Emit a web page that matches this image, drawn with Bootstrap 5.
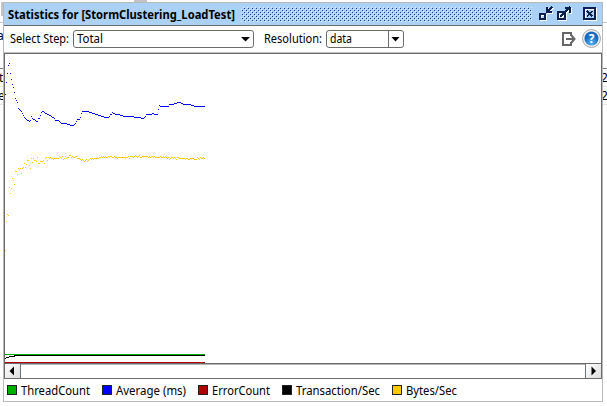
<!DOCTYPE html>
<html lang="en">
<head>
<meta charset="utf-8">
<title>Statistics</title>
<link href="https://cdn.jsdelivr.net/npm/bootstrap@5.3.0/dist/css/bootstrap.min.css" rel="stylesheet">
<style>
body{width:607px;height:406px;overflow:hidden;background:#fff;color:#000;font:12px/16px "Noto Sans","Open Sans",sans-serif}
svg{display:block;flex:none}
svg text{font:12px "Noto Sans",sans-serif}
.behind{position:absolute;left:0;top:0}
.win{position:relative;width:600px;height:400px;margin:2px 0 0 3px;border:1px solid #b9b9b9;background:#fff}
.titlebar{height:23px;background:#abd1f7;border-bottom:1px solid #6b6b6b;padding-left:4px}
.tools{height:27px;padding-left:6px;border-bottom:1px solid #c0c0c0}
.pick{height:18px;border:1px solid #6b6b6b;border-radius:3px;background:#fff}
.pick-step{width:181px}
.pick-res{width:78px}
.plot{height:310px;border:1px solid #6b6b6b;border-bottom:0}
.scroller{height:16px;border:1px solid #6b6b6b;box-shadow:inset 0 1px #b5b5b5}
.arrow{width:16px;height:14px;background:linear-gradient(135deg,#fff,#ddd)}
.legend-row{height:22px}
</style>
</head>
<body>
<svg class="behind" width="607" height="406" shape-rendering="crispEdges">
<path d="M0 22.500h3M603 22.500h4" stroke="#c4c4c4"/><path d="M0 68.500h3M603 68.500h4" stroke="#777"/><path d="M0 86.500h3M603 86.500h4M0 104.500h3M603 104.500h4" stroke="#e6e6e6"/>
<path d="M1 2h2v14h-2z" fill="#c4c4c4"/><path d="M134 1h13M136 .5h9" stroke="#c4c4c4" stroke-width="2"/>
<text x="-3" y="40">a</text><text x="-1" y="82">t</text><text x="-2" y="100">e</text><text x="601" y="82">2</text><text x="601" y="100">2</text>
</svg>
<main class="win d-flex flex-column">
<header class="titlebar d-flex align-items-center">
<svg width="231" height="22"><text x="0" y="16" textLength="227" lengthAdjust="spacingAndGlyphs" style="font-weight:700">Statistics for [StormClustering_LoadTest]</text></svg>
<svg width="294" height="22" shape-rendering="crispEdges"><defs><pattern id="dots" width="4" height="4" patternUnits="userSpaceOnUse"><path d="M1 1h1v1h-1zM3 3h1v1h-1z" fill="#163c84"/><path d="M0 0h1v1h-1zM2 2h1v1h-1z" fill="#e4f1ff"/></pattern></defs><rect x="2" y="4" width="291" height="15" fill="url(#dots)"/></svg>
<svg class="ms-1" width="64" height="22" shape-rendering="crispEdges" fill="none">
<g transform="translate(1 1)" stroke="#fff" stroke-width="2"><path d="M3 11h5v5H3zM10 4v5h5M11 8l4-4M21 9h7v7h-7zM23 14L33 4M28 5h5v5M47 5h11v11H47z"/></g>
<g stroke="#0a2052" stroke-width="2"><path d="M3 11h5v5H3zM10 4v5h5M11 8l4-4M21 9h7v7h-7zM23 14L33 4M28 5h5v5M47 5h11v11H47zM50 8l5.500 5.500M55.500 8L50 13.500"/></g></svg>
</header>
<section class="tools d-flex align-items-center">
<svg width="63" height="26"><text x="0" y="17" textLength="59" lengthAdjust="spacingAndGlyphs">Select Step:</text></svg>
<div class="pick pick-step d-flex justify-content-between align-items-center"><svg width="60" height="16"><text x="3" y="12" textLength="26" lengthAdjust="spacingAndGlyphs">Total</text></svg><svg width="14" height="16"><path d="M2 6h9L6.500 10.500z"/></svg></div>
<svg width="72" height="26"><text x="10" y="17" textLength="58" lengthAdjust="spacingAndGlyphs">Resolution:</text></svg>
<div class="pick pick-res d-flex justify-content-between align-items-center"><svg width="40" height="16"><text x="3" y="12" textLength="22" lengthAdjust="spacingAndGlyphs">data</text></svg><svg width="15" height="16"><path d="M.5 0v16" stroke="#6b6b6b"/><path d="M3.500 6h8L7.500 10.500z"/></svg></div>
<svg class="ms-auto me-1" width="16" height="26" fill="none" stroke="#666" stroke-width="2"><path d="M10 10V7H2v12h8v-3M5 13h8M10.500 9.500l3 3.500-3 3.500"/></svg>
<svg width="21" height="26"><defs><radialGradient id="ball" cx=".5" cy=".8"><stop stop-color="#58b8f4"/><stop offset="1" stop-color="#176ac0"/></radialGradient></defs><circle cx="10.500" cy="12.500" r="9" fill="#eee" stroke="#aaa"/><circle cx="10.500" cy="12.500" r="7" fill="url(#ball)"/><text x="10.500" y="17" text-anchor="middle" style="font-weight:700;fill:#fff">?</text></svg>
</section>
<section class="plot"><svg id="chart" width="596" height="309" viewBox="5 54 596 309" shape-rendering="crispEdges"></svg></section>
<div class="scroller d-flex justify-content-between"><div class="arrow border-end border-secondary"><svg width="15" height="14"><path d="M9 2.500v9L4.500 7z"/></svg></div><div class="arrow border-start border-secondary"><svg width="15" height="14"><path d="M5.500 2.500v9L10 7z"/></svg></div></div>
<footer class="legend-row"><svg width="597" height="22" id="legend"></svg></footer>
</main>
<script src="https://cdn.jsdelivr.net/npm/bootstrap@5.3.0/dist/js/bootstrap.bundle.min.js"></script>
<script>
// Sample rows, one value per column starting at x = 5; "y*n" repeats a value n times.
const average='94 82 73 65 63 73 79 84 87 92 98 100 102 108 109 110 111 113 115 117 118 119 120*2 121 120 116 118 119*2 120 121*2 118*2 115 112 111*2 112 113*2 114*2 115*2 116 117*2 118 120*4 121 122 123*6 124*3 125*4 124 123 121 119*3 117 113 111*7 112*3 113*3 114*3 115*3 116*3 117*5 116 114*2 112 113*2 114*5 115*3 116*11 117*7 118*3 117 116 114*6 113*2 114*4 109 105 106*9 104*5 103*3 102*4 103*2 104*8 105*3 106*11';
const bytes='250 221 214 215 187 193 188 178 180 184 171*2 174 168 169 168 173 168 167 163 167 164 160*2 165 168 158 162 158 160*2 161 157 163*2 161*3 160 163 158 157 160 157 158 157 158*2 159 158*5 156 157 158 156 159 158 156 158 157 157 155*2 157 156 157*2 156*2 158*3 159 160 159 160 161 160 159 161 160 159 158 159 158 159 158*5 157*2 156 157 156 157 156 157 157 156 157 156*2 157*2 156 157*2 158 157*7 158 157*2 156 158 156*3 157 156 155 156 157 156 155 157*2 156*6 157 156 157 156 156 157 156 157*5 156 157 157 156 157 156 157 158 157 159 158 157*2 158 157 158 159 157 157 158*6 159 158 158 159*2 158*4 159*3 157 158 159 157 158*2 157 158 157*2 158*2 157*4 158';
const expand=s=>s.split(' ').flatMap(v=>{const [y,n]=v.split('*');return Array(+(n||1)).fill(+y)});
const trace=(s,c)=>'<path fill="'+c+'" d="'+expand(s).slice(0,200).map((y,i)=>`M${i+5} ${y}h1v1h-1z`).join('')+'"/>';
document.getElementById('chart').innerHTML=trace(average,'#0000ff')+trace(bytes,'#ffc800')+'<path fill="#000" d="M5 358h1v-1h3v1H6v1H5zM9 356h6v1H9zM14 355h191v1H14z"/><path fill="#00b000" d="M5 354h200v1H5z"/><path fill="#b00000" d="M5 362h200v1H5z"/>';
document.getElementById('legend').innerHTML=[[3,'#00b000','ThreadCount',17,69],[98,'#0000ff','Average (ms)',112,70],[194,'#b00000','ErrorCount',208,58],[278,'#000','Transaction/Sec',292,84],[388,'#ffc800','Bytes/Sec',402,51]].map(([x,c,t,tx,w])=>`<rect x="${x+.5}" y="6.500" width="9" height="9" fill="${c}" stroke="#222"/><text x="${tx}" y="16" textLength="${w}" lengthAdjust="spacingAndGlyphs">${t}</text>`).join('');
</script>
</body>
</html>
